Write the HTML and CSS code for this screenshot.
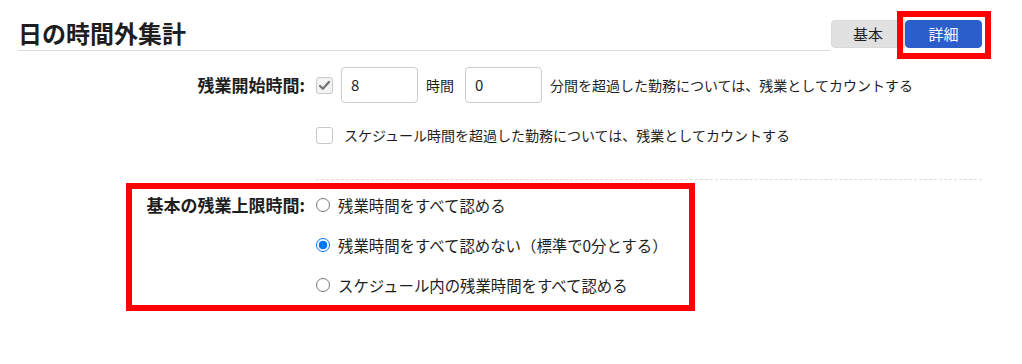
FILE: index.html
```html
<!DOCTYPE html>
<html lang="ja">
<head>
<meta charset="utf-8">
<title>日の時間外集計</title>
<link rel="stylesheet" href="styles.css">
</head>
<body>
<div class="page">
  <header class="head">
    <h2 class="title">日の時間外集計</h2>
    <div class="seg">
      <button class="seg-btn seg-basic" type="button">基本</button>
      <button class="seg-btn seg-detail" type="button">詳細</button>
    </div>
  </header>

  <section class="form">
    <div class="row row-start">
      <div class="label">残業開始時間:</div>
      <div class="ctrl">
        <span class="cb cb-checked">
          <svg viewBox="0 0 16 16" width="13" height="13"><path d="M2.5 8.6 L6 12 L13.5 3.6" fill="none" stroke="#737373" stroke-width="2.8" stroke-linecap="round" stroke-linejoin="round"/></svg>
        </span>
        <span class="field">8</span>
        <span class="unit">時間</span>
        <span class="field">0</span>
        <span class="txt">分間を超過した勤務については、残業としてカウントする</span>
      </div>
    </div>

    <div class="row row-sched">
      <div class="label"></div>
      <div class="ctrl">
        <span class="cb"></span>
        <span class="txt txt-cb">スケジュール時間を超過した勤務については、残業としてカウントする</span>
      </div>
    </div>

    <div class="divider"></div>

    <div class="row row-limit">
      <div class="label">基本の残業上限時間:</div>
      <div class="radios">
        <div class="opt"><span class="rd"></span><span class="txt txt-rd">残業時間をすべて認める</span></div>
        <div class="opt"><span class="rd rd-on"></span><span class="txt txt-rd">残業時間をすべて認めない（標準で0分とする）</span></div>
        <div class="opt"><span class="rd"></span><span class="txt txt-rd">スケジュール内の残業時間をすべて認める</span></div>
      </div>
    </div>
  </section>

  <div class="mark mark-tab"></div>
  <div class="mark mark-limit"></div>
</div>
</body>
</html>
```

FILE: styles.css
```css
* { box-sizing: border-box; }

html, body {
  margin: 0;
  padding: 0;
  background: #ffffff;
}

body {
  font-family: "Noto Sans CJK JP", "Noto Sans", sans-serif;
  color: #1e1e1e;
  font-size: 14px;
}

.page {
  position: relative;
  width: 1022px;
  height: 364px;
  padding: 0 40px 0 18px;
}

/* header */
.head {
  display: flex;
  align-items: flex-end;
}

.title {
  flex: 1;
  margin: 17px 0 0 0;
  font-size: 24px;
  font-weight: 700;
  line-height: 32px;
  padding-bottom: 1px;
  border-bottom: 1px solid #dcdcdc;
  color: #1e1e1e;
}

.seg {
  display: flex;
  margin: 0 0 3px 1px;
}

.seg-btn {
  font-family: "Noto Sans CJK JP", "Noto Sans", sans-serif;
  font-size: 15px;
  height: 28px;
  padding: 0;
  border: 1px solid transparent;
  line-height: 26px;
  cursor: pointer;
}

.seg-basic {
  width: 74px;
  background: #e1e1e1;
  border-color: #dadada;
  color: #1e1e1e;
  border-radius: 4px 0 0 4px;
}

.seg-detail {
  width: 77px;
  background: #2c5ecb;
  border-color: #2c5ecb;
  color: #ffffff;
  border-radius: 4px;
}

/* form */
.form {
  margin-top: 16px;
}

.row {
  display: flex;
}

.label {
  width: 287px;
  flex: none;
  text-align: right;
  font-size: 17px;
  font-weight: 700;
  color: #1e1e1e;
  margin-right: 11px;
}

.ctrl {
  display: flex;
  align-items: center;
}

.row-start .label {
  line-height: 36px;
}

.row-start .ctrl {
  height: 36px;
}

.cb {
  width: 17px;
  height: 17px;
  flex: none;
  border: 1px solid #c9c9c9;
  border-radius: 3px;
  background: #ffffff;
  display: flex;
  align-items: center;
  justify-content: center;
}

.cb-checked {
  background: #f3f3f3;
  margin-right: 8px;
}

.field {
  width: 77px;
  height: 36px;
  border: 1px solid #cccccc;
  border-radius: 4px;
  padding-left: 9px;
  font-size: 15px;
  line-height: 34px;
  color: #1e1e1e;
  margin-right: 8px;
}

.unit {
  margin-right: 11px;
}

.txt {
  line-height: 24px;
  white-space: nowrap;
  color: #1e1e1e;
}

.row-sched {
  margin-top: 20px;
}

.row-sched .ctrl {
  height: 24px;
}

.txt-cb {
  margin-left: 11px;
}

.divider {
  margin: 32px 0 0 298px;
  border-top: 1px dashed #dddddd;
}

.row-limit {
  margin-top: 13px;
}

.row-limit .label {
  line-height: 24px;
}

.radios {
  display: flex;
  flex-direction: column;
  gap: 16px;
}

.opt {
  display: flex;
  align-items: center;
  height: 24px;
}

.txt-rd {
  font-size: 15.4px;
}

.rd {
  width: 14px;
  height: 14px;
  flex: none;
  border-radius: 50%;
  border: 1px solid #767676;
  background: #ffffff;
  margin-right: 8px;
}

.rd-on {
  border: 1.5px solid #0075ff;
  background: radial-gradient(circle, #0075ff 0 4px, #ffffff 4.6px);
}

/* annotation overlays */
.mark {
  position: absolute;
  border: 6px solid #ff0000;
  pointer-events: none;
}

.mark-tab {
  left: 897px;
  top: 11px;
  width: 94px;
  height: 48px;
}

.mark-limit {
  left: 126px;
  top: 183px;
  width: 569px;
  height: 128px;
}
```
